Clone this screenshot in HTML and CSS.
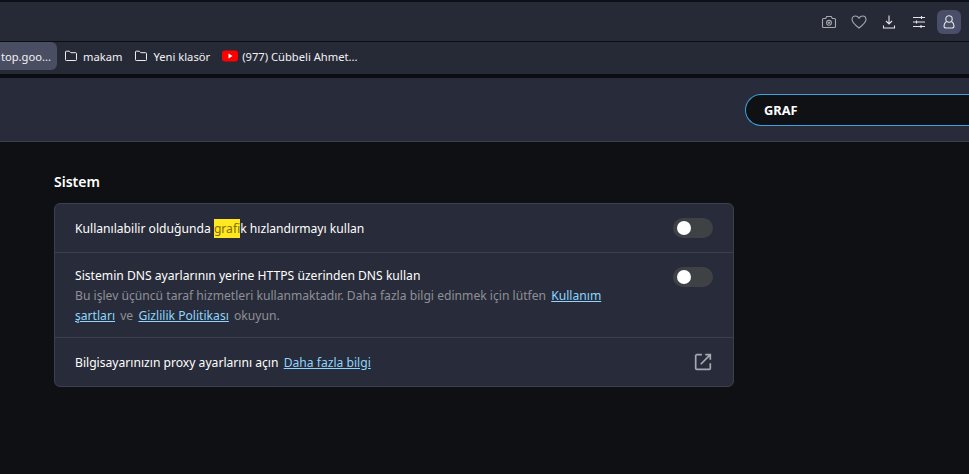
FILE: index.html
```html
<!DOCTYPE html>
<html lang="tr">
<head>
    <meta charset="UTF-8">
    <title>Ayarlar</title>
    <link rel="stylesheet" href="styles.css">
</head>
<body>
    <div class="toolbar">
        <svg class="tool" viewBox="0 0 16 16"><path d="M1.500 5.500a1 1 0 0 1 1-1h2.200l1-2h4.600l1 2h2.200a1 1 0 0 1 1 1v7a1 1 0 0 1-1 1h-11a1 1 0 0 1-1-1z"/><circle cx="8" cy="8.800" r="2.400"/><circle cx="8" cy="8.800" r=".6"/></svg>
        <svg class="tool" viewBox="0 0 16 16"><path d="M8 14C3.500 10.600 1 8.300 1 5.500 1 3.400 2.600 2 4.400 2 5.900 2 7.200 2.800 8 4.100 8.800 2.800 10.100 2 11.600 2 13.400 2 15 3.400 15 5.500 15 8.300 12.500 10.600 8 14z"/></svg>
        <svg class="tool tool-light" viewBox="0 0 16 16"><path d="M8 1.500v8M5 7l3 3 3-3M2.500 11.500v2.500h11v-2.500"/></svg>
        <svg class="tool tool-light" viewBox="0 0 16 16"><path d="M2 3.500h12M2 8h12M2 12.500h12M10.500 2v3M5.500 6.500v3M10 11v3"/></svg>
        <div class="profile">
            <svg class="tool tool-light" viewBox="0 0 16 16"><circle cx="8" cy="5" r="3.200"/><path d="M5.500 7.500C3.800 8.500 3 10 3 12c0 1.300.7 2 2 2h6c1.300 0 2-.7 2-2 0-2-.8-3.500-2.500-4.500"/></svg>
        </div>
    </div>

    <div class="bookmarks">
        <a class="bookmark-chip"><span>top.goo...</span></a>
        <a class="bookmark">
            <svg class="folder" viewBox="0 0 14 14"><path d="M1.500 3a.8.8 0 0 1 .8-.8h3l1.500 1.500h4.900a.8.8 0 0 1 .8.8v6.200a.8.8 0 0 1-.8.8H2.300a.8.8 0 0 1-.8-.8z"/></svg>
            makam
        </a>
        <a class="bookmark">
            <svg class="folder" viewBox="0 0 14 14"><path d="M1.500 3a.8.8 0 0 1 .8-.8h3l1.500 1.500h4.900a.8.8 0 0 1 .8.8v6.200a.8.8 0 0 1-.8.8H2.300a.8.8 0 0 1-.8-.8z"/></svg>
            Yeni klasör
        </a>
        <a class="bookmark bookmark-video">
            <svg class="youtube" viewBox="0 0 16 12"><rect width="16" height="11" y=".5" rx="3" fill="#f00"/><path d="M6.500 3.500v5l4-2.500z" fill="#fff"/></svg>
            (977) Cübbeli Ahmet...
        </a>
    </div>

    <header class="page-header">
        <div class="search">GRAF</div>
    </header>

    <main class="content">
        <h2>Sistem</h2>
        <section class="card">
            <div class="row row-first">
                <div class="row-text">Kullanılabilir olduğunda <mark>graf</mark>ik hızlandırmayı kullan</div>
                <div class="toggle"><span></span></div>
            </div>
            <div class="row row-tall">
                <div class="row-text">
                    Sistemin DNS ayarlarının yerine HTTPS üzerinden DNS kullan
                    <p>Bu işlev üçüncü taraf hizmetleri kullanmaktadır. Daha fazla bilgi edinmek için lütfen <a href="#">Kullanım şartları</a> ve <a href="#">Gizlilik Politikası</a> okuyun.</p>
                </div>
                <div class="toggle"><span></span></div>
            </div>
            <div class="row row-last">
                <div class="row-text">Bilgisayarınızın proxy ayarlarını açın <a href="#">Daha fazla bilgi</a></div>
                <svg class="external" viewBox="0 0 16 16"><path d="M7 1.500H2.500a1 1 0 0 0-1 1v11a1 1 0 0 0 1 1h11a1 1 0 0 0 1-1V9M10 1.500h4.500V6M14.500 1.500 6 10"/></svg>
            </div>
        </section>
    </main>
</body>
</html>
```

FILE: styles.css
```css
* {
    box-sizing: border-box;
}

body {
    margin: 0;
    height: 474px;
    overflow: hidden;
    font-family: "Noto Sans", Arial, sans-serif;
    font-size: 12px;
    background-color: #0f1013;
    color: #fff;
}

.toolbar {
    display: flex;
    justify-content: flex-end;
    align-items: center;
    gap: 14px;
    height: 42px;
    padding-right: 8px;
    background-color: #262a37;
    border-top: 2px solid #0e1017;
    border-bottom: 1px solid #0b0d12;
}

.tool {
    width: 16px;
    height: 16px;
    fill: none;
    stroke: #a5a8af;
    stroke-width: 1.1;
}

.tool-light {
    stroke: #e4e5e8;
}

.profile {
    display: flex;
    justify-content: center;
    align-items: center;
    width: 24px;
    height: 24px;
    margin-left: -4px;
    border-radius: 6px;
    background-color: #4a4e68;
}

.bookmarks {
    display: flex;
    align-items: center;
    height: 36px;
    padding-bottom: 4px;
    font-size: 11.200px;
    background-color: #262a37;
    border-bottom: 4px solid #0b0d12;
}

.bookmark,
.bookmark-chip {
    display: flex;
    align-items: center;
    color: #f2f2f4;
    white-space: nowrap;
}

.bookmark-chip {
    justify-content: flex-end;
    width: 57px;
    height: 28px;
    margin-right: 1px;
    padding-right: 6px;
    border-radius: 0 6px 6px 0;
    background-color: #4a4e62;
}

.bookmark {
    gap: 5px;
    padding: 0 6px;
}

.bookmark-video {
    gap: 4px;
}

.folder {
    width: 14px;
    height: 14px;
    fill: none;
    stroke: #eceded;
    stroke-width: 1;
}

.youtube {
    width: 16px;
    height: 12px;
}

.page-header {
    display: flex;
    justify-content: flex-end;
    align-items: center;
    height: 64px;
    background-color: #282c3a;
    border-bottom: 1px solid #3c404c;
}

.search {
    width: 224px;
    height: 32px;
    padding-left: 18px;
    line-height: 30px;
    font-size: 12.800px;
    font-weight: 700;
    background-color: #101114;
    border: 1px solid #3aa3dc;
    border-right: none;
    border-radius: 16px 0 0 16px;
}

.content {
    width: 680px;
    margin-left: 54px;
}

h2 {
    margin: 30px 0 11px;
    font-size: 14px;
    line-height: 20px;
    font-weight: 600;
}

.card {
    border: 1px solid #3c404c;
    border-radius: 6px;
    background-color: #282c3a;
}

.row {
    display: flex;
    justify-content: space-between;
    padding: 0 20px;
    font-size: 12.130px;
}

.row + .row {
    border-top: 1px solid #3c404c;
}

.row-first {
    align-items: center;
    height: 48px;
}

.row-tall {
    align-items: flex-start;
    height: 85px;
    padding-top: 14px;
}

.row-last {
    align-items: center;
    height: 49px;
}

.row-text {
    line-height: 20px;
}

.row-first .row-text,
.row-last .row-text {
    margin-top: 2px;
}

.row-tall .row-text {
    margin-top: -1px;
}

.row-text p {
    width: 540px;
    margin: 0;
    color: #8e9096;
}

.row-text a {
    margin: 0 2px;
    color: #8cd6ff;
}

mark {
    padding: 1px 0;
    color: #7f6a10;
    background-color: #ffe81f;
}

.toggle {
    display: flex;
    align-items: center;
    flex-shrink: 0;
    width: 40px;
    height: 20px;
    padding-left: 4px;
    border-radius: 10px;
    background-color: #3f4245;
}

.toggle span {
    width: 14px;
    height: 14px;
    border-radius: 50%;
    background-color: #fff;
}

.external {
    width: 18px;
    height: 18px;
    margin-right: 1px;
    fill: none;
    stroke: #a5a8af;
    stroke-width: 1.500;
}
```
